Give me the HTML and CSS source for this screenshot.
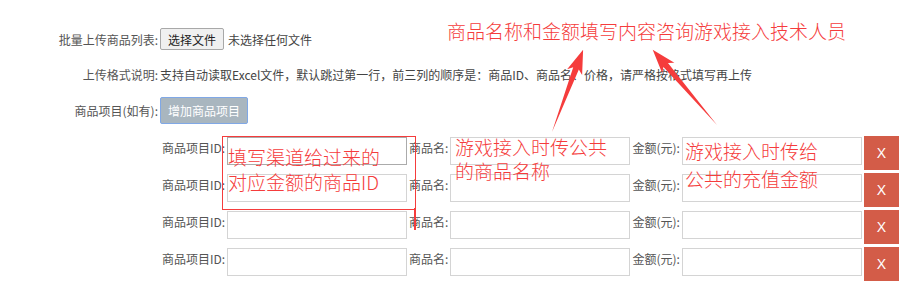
FILE: index.html
```html
<!DOCTYPE html>
<html lang="zh-CN">
  <head>
    <meta charset="UTF-8">
    <title>商品列表</title>
    <link rel="stylesheet" href="styles.css">
  </head>
  <body>
    <div id="page">
      <div class="group first">
        <label class="label">批量上传商品列表:</label>
        <button class="file-btn">选择文件</button>
        <span class="file-name">未选择任何文件</span>
      </div>
      <div class="group second">
        <label class="label">上传格式说明:</label>
        <span class="desc">支持自动读取Excel文件，默认跳过第一行，前三列的顺序是：商品ID、商品名、价格，请严格按格式填写再上传</span>
      </div>
      <div class="group third">
        <label class="label">商品项目(如有):</label>
        <button class="add-btn">增加商品项目</button>
      </div>

      <div id="items">
        <div class="item">
          <span class="item-label">商品项目ID:</span><input class="item-input active" type="text">
          <span class="item-label">商品名:</span><input class="item-input" type="text">
          <span class="item-label">金额(元):</span><input class="item-input" type="text">
          <button class="del-btn">X</button>
        </div>
        <div class="item">
          <span class="item-label">商品项目ID:</span><input class="item-input" type="text">
          <span class="item-label">商品名:</span><input class="item-input" type="text">
          <span class="item-label">金额(元):</span><input class="item-input" type="text">
          <button class="del-btn">X</button>
        </div>
        <div class="item">
          <span class="item-label">商品项目ID:</span><input class="item-input" type="text">
          <span class="item-label">商品名:</span><input class="item-input" type="text">
          <span class="item-label">金额(元):</span><input class="item-input" type="text">
          <button class="del-btn">X</button>
        </div>
        <div class="item">
          <span class="item-label">商品项目ID:</span><input class="item-input" type="text">
          <span class="item-label">商品名:</span><input class="item-input" type="text">
          <span class="item-label">金额(元):</span><input class="item-input" type="text">
          <button class="del-btn">X</button>
        </div>
      </div>

      <!-- annotations drawn over the form -->
      <div class="note note-top">商品名称和金额填写内容咨询游戏接入技术人员</div>
      <div class="note-box"></div>
      <div class="note-tick"></div>
      <div class="note note-id">填写渠道给过来的<br>对应金额的商品ID</div>
      <div class="note note-name">游戏接入时传公共<br>的商品名称</div>
      <div class="note note-money">游戏接入时传给<br>公共的充值金额</div>
      <svg class="arrows" width="918" height="302">
        <polygon points="0,0 68,-3 64,-8 88,0 64,8 68,3" transform="translate(552,132) rotate(-69.3)" />
        <polygon points="0,0 79,-3 75,-8 99,0 75,8 79,3" transform="translate(717,125) rotate(-130.5)" />
      </svg>
    </div>
  </body>
</html>
```

FILE: styles.css
```css
body {
    margin: 0;
    font-family: "Noto Sans CJK SC", sans-serif;
    font-size: 12px;
    color: #555;
    background-color: #fff;
}
#page {
    position: relative;
    width: 918px;
    height: 302px;
    padding-top: 28px;
    box-sizing: border-box;
}
.group {
    display: flex;
    align-items: center;
}
.group.second {
    margin-top: 14px;
    height: 20px;
}
.group.third {
    margin-top: 13px;
}
.label {
    width: 160px;
    padding-right: 2px;
    text-align: right;
    box-sizing: border-box;
    white-space: nowrap;
}
.desc {
    white-space: nowrap;
    color: #444;
}
.file-btn {
    width: 64px;
    height: 22px;
    padding: 0;
    font-family: inherit;
    font-size: 12px;
    color: #222;
    background-color: #f0f0f0;
    border: 1px solid #a8a8a8;
    border-radius: 2px;
}
.file-name {
    margin-left: 4px;
    color: #444;
}
.add-btn {
    width: 88px;
    height: 27px;
    padding: 0;
    font-family: inherit;
    font-size: 12px;
    color: #fff;
    background-color: #a9b6bf;
    border: 1px solid #80a8e6;
    border-radius: 2px;
}
#items {
    margin-top: 12px;
    padding-left: 162px;
}
.item {
    display: flex;
    align-items: flex-start;
    height: 34px;
    margin-bottom: 3px;
}
.item-label {
    line-height: 24px;
    white-space: nowrap;
    padding-right: 2px;
}
.item-input {
    width: 180px;
    height: 28px;
    margin: 1px 2px 0 0;
    padding: 0 4px;
    box-sizing: border-box;
    border: 1px solid #d4d4d4;
    outline: none;
}
.item-input.active {
    border-color: #ababab;
}
.del-btn {
    width: 35px;
    height: 34px;
    padding: 0;
    border: none;
    background-color: #d35c48;
    color: #fff;
    font-family: "Liberation Sans", sans-serif;
    font-size: 14px;
}
.note {
    position: absolute;
    color: #f53c3c;
    font-size: 19px;
    font-weight: 300;
    white-space: nowrap;
}
.note-top {
    left: 447px;
    top: 20px;
    line-height: 22px;
}
.note-id {
    left: 228px;
    top: 144px;
    line-height: 25px;
}
.note-name {
    left: 455px;
    top: 135px;
    line-height: 24px;
}
.note-money {
    left: 685px;
    top: 137px;
    line-height: 28px;
}
.note-box {
    position: absolute;
    left: 222px;
    top: 136px;
    width: 192px;
    height: 72px;
    border: 1px solid #f53c3c;
}
.note-tick {
    position: absolute;
    left: 414px;
    top: 208px;
    width: 2px;
    height: 22px;
    background-color: #f53c3c;
}
.arrows {
    position: absolute;
    left: 0;
    top: 0;
    fill: #f53c3c;
}
```
